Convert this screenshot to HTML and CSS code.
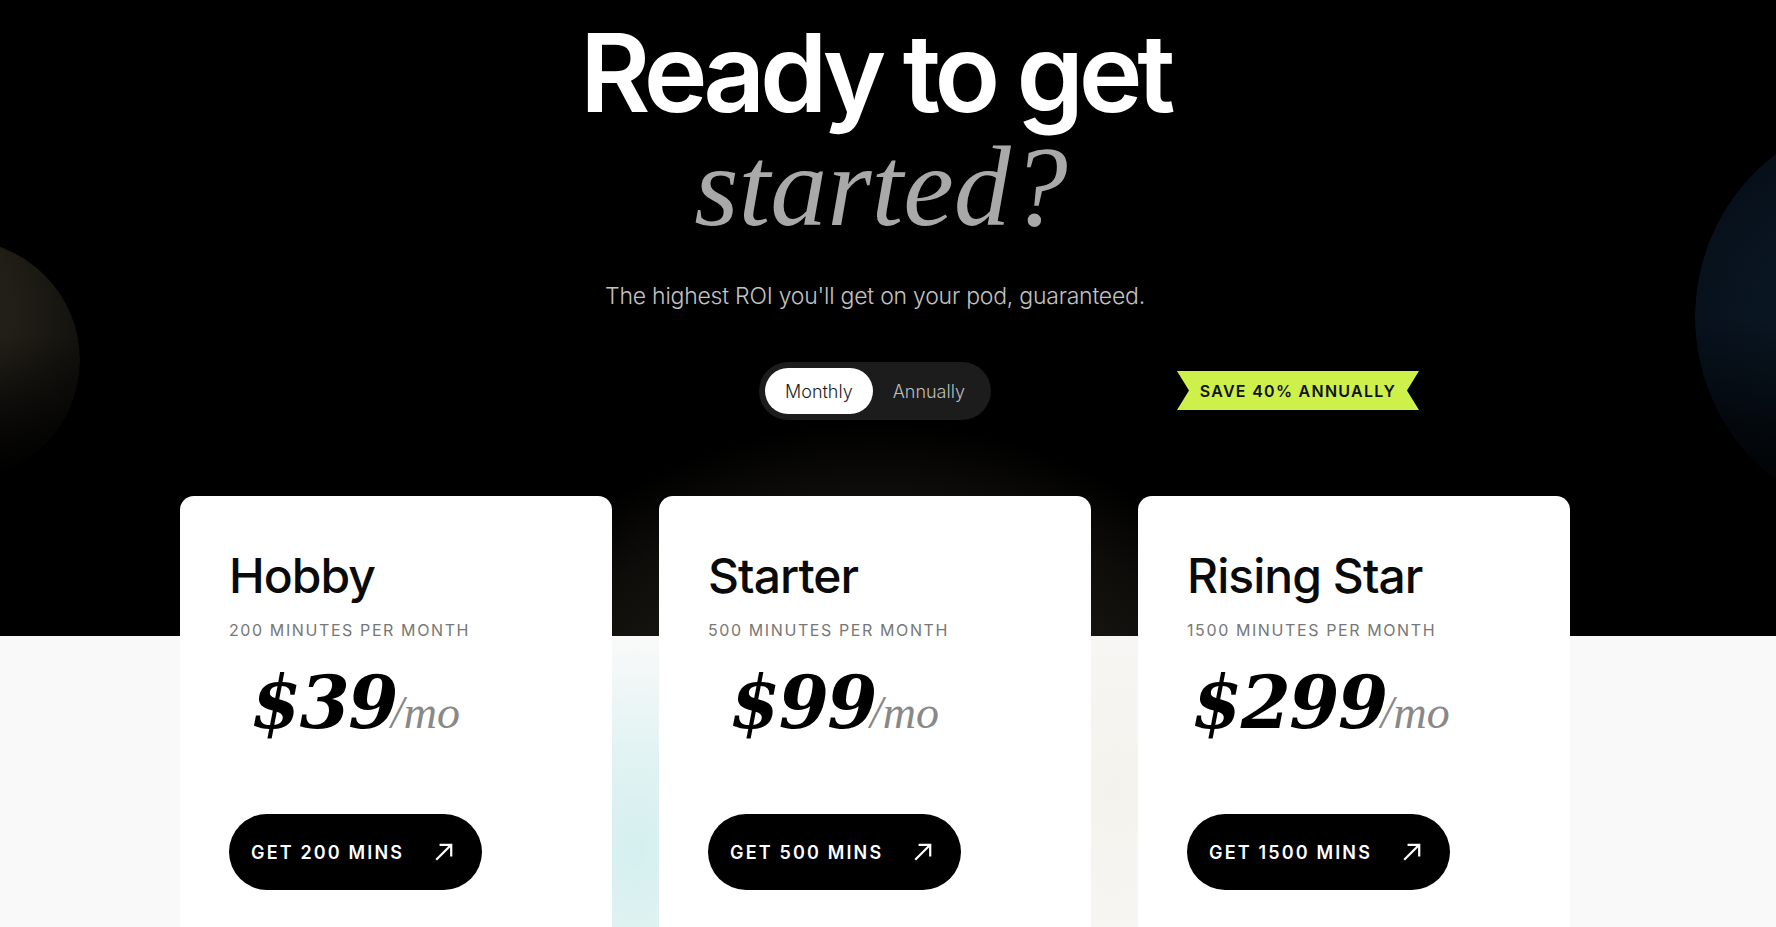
FILE: index.html
```html
<!DOCTYPE html>
<html lang="en">
<head>
    <meta charset="UTF-8">
    <meta name="viewport" content="width=device-width, initial-scale=1.0">
    <title>Pricing</title>
    <link rel="stylesheet" href="styles.css">
</head>
<body>
    <section class="pricing">
        <!-- decorative spheres -->
        <div class="orb orb-left"></div>
        <div class="orb orb-right"></div>

        <div class="inner">
            <h1 class="title">Ready to get <span class="title-italic">started?</span></h1>
            <p class="subtitle">The highest ROI you'll get on your pod, guaranteed.</p>

            <div class="toggle-row">
                <div class="toggle">
                    <span class="toggle-opt active">Monthly</span>
                    <span class="toggle-opt">Annually</span>
                </div>
                <span class="save-badge">SAVE 40% ANNUALLY</span>
            </div>

            <div class="plans">
                <div class="plan">
                    <h2 class="plan-name">Hobby</h2>
                    <div class="plan-minutes">200 MINUTES PER MONTH</div>
                    <div class="plan-price"><span class="amount">$39</span><span class="per">/mo</span></div>
                    <a class="plan-btn" href="#">GET 200 MINS
                        <svg class="arrow" width="20" height="20" viewBox="0 0 18 18" fill="none" stroke="currentColor" stroke-width="2"><path d="M2 16 L15.5 2.5 M5 2.5 H15.5 V13"/></svg>
                    </a>
                </div>
                <div class="plan">
                    <h2 class="plan-name">Starter</h2>
                    <div class="plan-minutes">500 MINUTES PER MONTH</div>
                    <div class="plan-price"><span class="amount">$99</span><span class="per">/mo</span></div>
                    <a class="plan-btn" href="#">GET 500 MINS
                        <svg class="arrow" width="20" height="20" viewBox="0 0 18 18" fill="none" stroke="currentColor" stroke-width="2"><path d="M2 16 L15.5 2.5 M5 2.5 H15.5 V13"/></svg>
                    </a>
                </div>
                <div class="plan">
                    <h2 class="plan-name">Rising Star</h2>
                    <div class="plan-minutes">1500 MINUTES PER MONTH</div>
                    <div class="plan-price wide"><span class="amount">$299</span><span class="per">/mo</span></div>
                    <a class="plan-btn" href="#">GET 1500 MINS
                        <svg class="arrow" width="20" height="20" viewBox="0 0 18 18" fill="none" stroke="currentColor" stroke-width="2"><path d="M2 16 L15.5 2.5 M5 2.5 H15.5 V13"/></svg>
                    </a>
                </div>
            </div>
        </div>
    </section>
</body>
</html>
```

FILE: styles.css
```css
* {
    box-sizing: border-box;
}
body {
    margin: 0;
    font-family: "Inter", "Liberation Sans", sans-serif;
    background-color: #000;
}
.pricing {
    position: relative;
    height: 100vh;
    overflow: hidden;
    padding-right: 26px;
    background:
        radial-gradient(circle 490px at 875px 912px, #231f17 0, #1b1913 60%, #0e0d0a 85%, #000 100%) top / 100% 636px no-repeat,
        radial-gradient(ellipse 170px 210px at 636px 850px, #d4efef 0, rgba(212, 239, 239, 0.6) 50%, rgba(212, 239, 239, 0) 100%),
        radial-gradient(ellipse 200px 280px at 1115px 790px, #f4f2ec 0, rgba(244, 242, 236, 0) 100%),
        #f9f9f9;
}
.orb {
    position: absolute;
    border-radius: 50%;
    z-index: 0;
}
.orb-left {
    width: 240px;
    height: 240px;
    left: -160px;
    top: 240px;
    background: radial-gradient(circle at 35% 30%, #2b271d 0, #211e17 40%, #12110d 70%, #060605 100%);
    -webkit-mask-image: linear-gradient(to bottom, #000 40%, transparent 100%);
    mask-image: linear-gradient(to bottom, #000 40%, transparent 100%);
}
.orb-right {
    width: 410px;
    height: 410px;
    right: -329px;
    top: 112px;
    background: radial-gradient(circle at 35% 50%, #0b1926 0, #08121d 40%, #040a10 70%, #020406 100%);
    -webkit-mask-image: linear-gradient(to bottom, #000 50%, transparent 100%);
    mask-image: linear-gradient(to bottom, #000 50%, transparent 100%);
}
.inner {
    position: relative;
    z-index: 1;
    display: flex;
    flex-direction: column;
    align-items: center;
}
.title {
    margin: 18px 0 0;
    font-size: 108px;
    line-height: 110px;
    font-weight: 600;
    letter-spacing: -0.05em;
    color: #fff;
    text-align: center;
}
.title-italic {
    display: block;
    margin-top: 4px;
    padding-left: 12px;
    font-family: "Liberation Serif", serif;
    font-style: italic;
    font-weight: 400;
    font-size: 114px;
    letter-spacing: 0;
    color: #a9a9a9;
}
.subtitle {
    margin: 39px 0 0;
    font-size: 23px;
    line-height: 30px;
    font-weight: 300;
    letter-spacing: -0.01em;
    color: #c2c2c2;
}
.toggle-row {
    position: relative;
    margin-top: 51px;
}
.toggle {
    display: flex;
    padding: 6px;
    background-color: #1c1c1c;
    border-radius: 29px;
}
.toggle-opt {
    display: flex;
    align-items: center;
    height: 46px;
    padding: 0 20px;
    border-radius: 23px;
    font-size: 18px;
    font-weight: 300;
    color: #bdbdbd;
}
.toggle-opt.active {
    background-color: #fff;
    color: #1e1e1e;
}
.save-badge {
    position: absolute;
    left: 100%;
    top: 9px;
    margin-left: 186px;
    display: flex;
    align-items: center;
    justify-content: center;
    width: 242px;
    height: 39px;
    white-space: nowrap;
    background-color: #cdf04b;
    clip-path: polygon(0 0, 100% 0, calc(100% - 12px) 50%, 100% 100%, 0 100%, 12px 50%);
    font-size: 16px;
    font-weight: 600;
    letter-spacing: 0.08em;
    color: #111;
}
.plans {
    display: flex;
    gap: 47px;
    margin-top: 76px;
}
.plan {
    width: 432px;
    background-color: #fff;
    border-radius: 14px;
    padding: 51px 49px 80px;
}
.plan-name {
    margin: 0;
    font-size: 48px;
    line-height: 58px;
    font-weight: 500;
    letter-spacing: -0.02em;
    color: #0a0a0a;
}
.plan-minutes {
    margin-top: 15px;
    font-size: 16px;
    line-height: 20px;
    letter-spacing: 0.1em;
    color: #777;
}
.plan-price {
    display: flex;
    align-items: baseline;
    margin-top: 18px;
    height: 90px;
    line-height: 90px;
    padding-left: 22px;
}
.plan-price.wide {
    padding-left: 5px;
}
.amount {
    font-family: "DejaVu Serif", serif;
    font-style: italic;
    font-weight: 700;
    font-size: 72px;
    letter-spacing: -0.02em;
    color: #000;
}
.per {
    margin-left: -6px;
    font-family: "Liberation Serif", serif;
    font-style: italic;
    font-size: 46px;
    color: #888;
}
.plan-btn {
    display: inline-flex;
    align-items: center;
    gap: 30px;
    height: 76px;
    margin-top: 66px;
    padding: 0 28px 0 22px;
    background-color: #000;
    border-radius: 38px;
    color: #fff;
    text-decoration: none;
    font-size: 18px;
    font-weight: 600;
    letter-spacing: 0.12em;
}
```
